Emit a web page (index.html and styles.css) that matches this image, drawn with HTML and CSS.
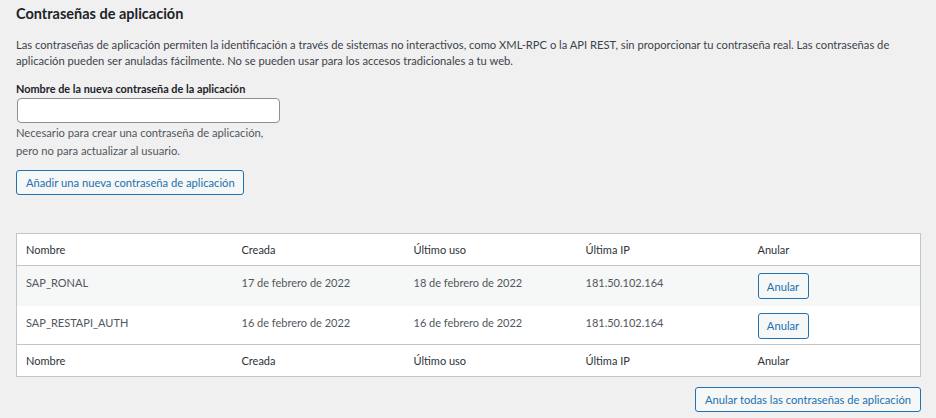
FILE: index.html
```html
<!DOCTYPE html>
<html lang="es">
<head>
<meta charset="utf-8">
<title>Contraseñas de aplicación</title>
<link rel="stylesheet" href="styles.css">
</head>
<body>
<div class="wrap">
  <h2 class="title">Contraseñas de aplicación</h2>
  <p class="intro">Las contraseñas de aplicación permiten la identificación a través de sistemas no interactivos, como XML-RPC o la API REST, sin proporcionar tu contraseña real. Las contraseñas de aplicación pueden ser anuladas fácilmente. No se pueden usar para los accesos tradicionales a tu web.</p>
  <label class="label" for="app-name">Nombre de la nueva contraseña de la aplicación</label>
  <input class="input" id="app-name" type="text">
  <p class="desc">Necesario para crear una contraseña de aplicación,<br>pero no para actualizar al usuario.</p>
  <button class="btn btn-add" type="button">Añadir una nueva contraseña de aplicación</button>

  <table class="table">
    <colgroup>
      <col class="c1"><col class="c2"><col class="c2"><col class="c2"><col class="c2">
    </colgroup>
    <thead>
      <tr><th>Nombre</th><th>Creada</th><th>Último uso</th><th>Última IP</th><th>Anular</th></tr>
    </thead>
    <tbody>
      <tr class="alt"><td>SAP_RONAL</td><td>17 de febrero de 2022</td><td>18 de febrero de 2022</td><td>181.50.102.164</td><td><button class="btn btn-sm" type="button">Anular</button></td></tr>
      <tr><td>SAP_RESTAPI_AUTH</td><td>16 de febrero de 2022</td><td>16 de febrero de 2022</td><td>181.50.102.164</td><td><button class="btn btn-sm" type="button">Anular</button></td></tr>
    </tbody>
    <tfoot>
      <tr><th>Nombre</th><th>Creada</th><th>Último uso</th><th>Última IP</th><th>Anular</th></tr>
    </tfoot>
  </table>

  <div class="actions">
    <button class="btn btn-all" type="button">Anular todas las contraseñas de aplicación</button>
  </div>
</div>
</body>
</html>
```
FILE: styles.css
```css
* { box-sizing: border-box; }
html, body { margin: 0; padding: 0; }
body {
  background: #f0f0f1;
  color: #3c434a;
  font-family: Lato, "Open Sans", sans-serif;
  font-size: 11.2px;
}
.wrap {
  width: 936px;
  padding: 4px 16px 0 16px;
}
.title {
  margin: 0;
  font-size: 14.5px;
  font-weight: 700;
  line-height: 20px;
  color: #1d2327;
}
.intro {
  margin: 13px 0 0;
  line-height: 16px;
  width: 905px;
}
.label {
  display: block;
  margin-top: 12px;
  font-size: 10.9px;
  font-weight: 700;
  line-height: 16px;
  color: #1d2327;
}
.input {
  display: block;
  margin: 1px 0 0 1px;
  width: 263px;
  height: 25px;
  border: 1px solid #8c8f94;
  border-radius: 4px;
  background: #fff;
}
.desc {
  margin: 1px 0 0;
  line-height: 18px;
  color: #50575e;
}
.btn {
  font-family: inherit;
  font-size: 11.2px;
  color: #2271b1;
  background: #f6f7f7;
  border: 1px solid #2271b1;
  border-radius: 3px;
  height: 25px;
  padding: 0 9px;
  line-height: 23px;
  white-space: nowrap;
  text-align: center;
  cursor: pointer;
}
.btn-add {
  display: block;
  margin-top: 10px;
  width: 228px;
}
.table {
  margin-top: 38px;
  width: 904px;
  border-collapse: collapse;
  table-layout: fixed;
  background: #fff;
  border: 1px solid #c3c4c7;
  font-size: 11px;
}
.c1 { width: 216px; }
.c2 { width: 172px; }
th {
  text-align: left;
  font-weight: 400;
  color: #2c3338;
  height: 32px;
  padding: 0 9px;
  line-height: 16px;
}
thead th { border-bottom: 1px solid #c3c4c7; }
tfoot th { border-top: 1px solid #c3c4c7; }
td {
  vertical-align: top;
  padding: 9px 9px 0;
  height: 39px;
  line-height: 16px;
  color: #50575e;
}
tr.alt td { background: #f6f7f7; height: 40px; }
.btn-sm {
  height: 26px;
  width: 51px;
  padding: 0;
  margin-top: -2px;
}
.actions {
  display: flex;
  justify-content: flex-end;
  width: 905px;
  margin-top: 10px;
}
.btn-all { width: 226px; }
```
